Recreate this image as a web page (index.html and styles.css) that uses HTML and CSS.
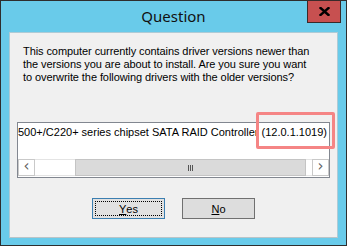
FILE: index.html
```html
<!DOCTYPE html>
<html lang="en">
<head>
  <meta charset="UTF-8">
  <title>Question</title>
  <link rel="stylesheet" href="styles.css">
</head>
<body>
  <div class="window">
    <div class="titlebar">Question</div>
    <button class="close-btn" title="Close">
      <svg width="11" height="9" viewBox="0 0 11 9">
        <path d="M1.5 1 L9.5 8 M9.5 1 L1.5 8" stroke="#000" stroke-width="2.4" stroke-linecap="square"/>
      </svg>
    </button>
    <div class="client">
      <p class="message">This computer currently contains driver versions newer than<br>the versions you are about to install. Are you sure you want<br>to overwrite the following drivers with the older versions?</p>
      <div class="listbox">
        <div class="list-row">500+/C220+ series chipset SATA RAID Controller (12.0.1.1019)</div>
        <div class="hscroll">
          <span class="arrow">&#8249;</span>
          <span class="track-left"></span>
          <span class="thumb"><span class="grip"></span><span class="grip"></span><span class="grip"></span></span>
          <span class="track-right"></span>
          <span class="arrow">&#8250;</span>
        </div>
      </div>
      <div class="buttons">
        <button class="btn default"><span class="focus"><u>Y</u>es</span></button>
        <button class="btn"><span class="label"><u>N</u>o</span></button>
      </div>
    </div>
    <!-- highlight annotation -->
    <div class="highlight"></div>
  </div>
</body>
</html>
```

FILE: styles.css
```css
/* window frame */
body {
  margin: 0;
  background: #fff;
}
.window {
  position: relative;
  width: 347px;
  height: 246px;
  box-sizing: border-box;
  border: 1px solid #2e2e2e;
  background: #69cbea;
  padding: 0 8px 7px 8px;
  display: flex;
  flex-direction: column;
  font-family: "Liberation Sans", Arial, sans-serif;
}
.titlebar {
  height: 31px;
  display: flex;
  align-items: center;
  justify-content: center;
  font-family: "Noto Sans", sans-serif;
  font-size: 15px;
  color: #111;
  padding-bottom: 1px;
  box-sizing: border-box;
}
.close-btn {
  position: absolute;
  top: -1px;
  right: 5px;
  width: 34px;
  height: 23px;
  box-sizing: border-box;
  border: 1px solid #3a2a2a;
  background: #c75050;
  padding: 0;
  display: flex;
  align-items: center;
  justify-content: center;
}
/* client area */
.client {
  flex: 1;
  background: #f0f0f0;
  border: 1px solid #aecbd6;
  border-bottom-color: #b9c4c8;
}
.message {
  margin: 12px 0 0 13px;
  font-size: 11px;
  line-height: 13px;
  letter-spacing: -0.08px;
  color: #000;
  white-space: nowrap;
}
.listbox {
  margin: 38px 0 0 7px;
  width: 313px;
  height: 56px;
  box-sizing: border-box;
  border: 1px solid #828790;
  background: #fff;
  display: flex;
  flex-direction: column;
  justify-content: space-between;
  overflow: hidden;
}
.list-row {
  margin-top: 3px;
  font-size: 11px;
  line-height: 13px;
  white-space: nowrap;
  color: #000;
}
/* horizontal scrollbar */
.hscroll {
  height: 17px;
  display: flex;
  background: #fff;
  margin-bottom: 1px;
}
.arrow {
  width: 17px;
  box-sizing: border-box;
  border: 1px solid #c9c9c9;
  background: #fff;
  color: #606060;
  font-family: "DejaVu Sans", sans-serif;
  font-size: 15px;
  line-height: 13px;
  text-align: center;
}
.track-left {
  width: 40px;
  border-top: 1px solid #e4e4e4;
  border-bottom: 1px solid #e4e4e4;
}
.track-right {
  width: 6px;
  border-top: 1px solid #e4e4e4;
  border-bottom: 1px solid #e4e4e4;
}
.thumb {
  flex: 1;
  background: #dadada;
  border: 1px solid #c4c4c4;
  display: flex;
  align-items: center;
  justify-content: center;
  gap: 1px;
}
.grip {
  width: 1px;
  height: 6px;
  background: #555;
}
/* buttons */
.buttons {
  display: flex;
  justify-content: center;
  gap: 17px;
  margin-top: 20px;
}
.btn {
  width: 73px;
  height: 21px;
  box-sizing: border-box;
  border: 1px solid #707070;
  background: #dddddd;
  padding: 2px;
  font-family: "Liberation Sans", Arial, sans-serif;
  font-size: 11px;
  color: #000;
  display: flex;
}
.btn.default {
  border-color: #3c7fb1;
  background: #e1e1e1;
}
.btn .focus,
.btn .label {
  flex: 1;
  display: flex;
  align-items: center;
  justify-content: center;
  box-sizing: border-box;
}
.btn .focus {
  border: 1px dotted #000;
}
/* red annotation box */
.highlight {
  position: absolute;
  left: 255px;
  top: 111px;
  width: 79px;
  height: 37px;
  box-sizing: border-box;
  border: 3px solid #f58585;
  border-radius: 2px;
}
```
